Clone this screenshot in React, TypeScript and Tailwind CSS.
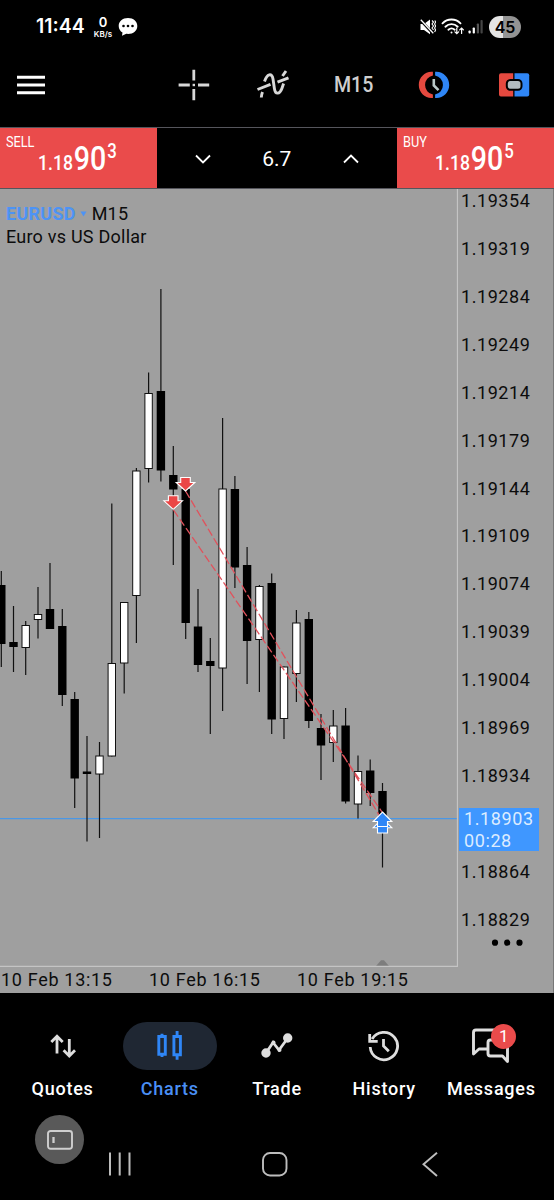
import { ReactNode } from 'react'

type Candle = {
  x: number
  high: number
  top: number
  bottom: number
  low: number
  up?: boolean
}

const candles: Candle[] = [
  { x: 1.3, high: 571, top: 585, bottom: 644, low: 667 },
  { x: 13.5, high: 606, top: 642, bottom: 647, low: 672 },
  { x: 25.7, high: 621, top: 625, bottom: 648, low: 675, up: true },
  { x: 38, high: 587, top: 614, bottom: 620, low: 638.5, up: true },
  { x: 50, high: 563, top: 609, bottom: 629, low: 629 },
  { x: 62.3, high: 609, top: 626, bottom: 695, low: 706 },
  { x: 74.7, high: 692, top: 699, bottom: 778.5, low: 808 },
  { x: 87, high: 736, top: 771.5, bottom: 774, low: 841.5 },
  { x: 99.5, high: 742, top: 755.5, bottom: 774.5, low: 838, up: true },
  { x: 111.8, high: 503.5, top: 663, bottom: 756.5, low: 756.5, up: true },
  { x: 124.2, high: 602, top: 602, bottom: 663.5, low: 693.5, up: true },
  { x: 136.4, high: 468, top: 470.5, bottom: 596, low: 643, up: true },
  { x: 148.6, high: 372.5, top: 393, bottom: 469, low: 482.5, up: true },
  { x: 160.9, high: 289, top: 391, bottom: 470.5, low: 481.5 },
  { x: 173.3, high: 446, top: 475, bottom: 489.5, low: 565 },
  { x: 185.7, high: 489, top: 489, bottom: 623, low: 639 },
  { x: 198, high: 589, top: 626.5, bottom: 665, low: 672 },
  { x: 210.3, high: 638, top: 661, bottom: 666, low: 734 },
  { x: 222.6, high: 418, top: 488.5, bottom: 668.5, low: 711, up: true },
  { x: 234.9, high: 476, top: 489, bottom: 567.5, low: 588 },
  { x: 247.1, high: 547, top: 565, bottom: 641, low: 684 },
  { x: 259.4, high: 585, top: 586, bottom: 640, low: 692, up: true },
  { x: 271.7, high: 573.5, top: 583, bottom: 719.5, low: 734 },
  { x: 284, high: 666.5, top: 666.5, bottom: 719, low: 739, up: true },
  { x: 296.4, high: 610, top: 622.5, bottom: 674, low: 702, up: true },
  { x: 308.8, high: 612, top: 619, bottom: 721, low: 728 },
  { x: 321, high: 714, top: 728, bottom: 745.5, low: 780 },
  { x: 333.3, high: 710, top: 725.5, bottom: 743, low: 762, up: true },
  { x: 345.6, high: 708, top: 725.5, bottom: 801.5, low: 803.5 },
  { x: 358, high: 755.5, top: 771, bottom: 804.5, low: 818.5, up: true },
  { x: 370.2, high: 759.5, top: 770.5, bottom: 793, low: 806 },
  { x: 382.5, high: 783, top: 791, bottom: 820, low: 867.5 },
]

const prices = [
  '1.19354',
  '1.19319',
  '1.19284',
  '1.19249',
  '1.19214',
  '1.19179',
  '1.19144',
  '1.19109',
  '1.19074',
  '1.19039',
  '1.19004',
  '1.18969',
  '1.18934',
  '',
  '1.18864',
  '1.18829',
]

const times = ['10 Feb 13:15', '10 Feb 16:15', '10 Feb 19:15']

function StatusBar() {
  return (
    <div className="flex h-[54px] items-center pl-9 pr-[33px] text-white">
      <span className="w-[50px] font-[Inter] text-[19.5px] font-semibold">11:44</span>
      <div className="ml-[6px] flex w-[22px] flex-col items-center font-[Inter] font-semibold">
        <span className="text-[13px] leading-[13px]">0</span>
        <span className="text-[8px] leading-[10px]">KB/s</span>
      </div>
      <svg className="ml-[4px] h-5 w-5" viewBox="0 0 20 20">
        <path d="M10 1C4.500 1 .7 4.400 .7 9c0 2.900 1.500 5.200 3.800 6.600L4 18.800l4.300-2c.5.1 1.100.1 1.700.1 5.500 0 9.300-3.400 9.300-8S15.500 1 10 1Z" fill="#fff" />
        <g fill="#000">
          <circle cx="5.500" cy="9" r="1.300" />
          <circle cx="10" cy="9" r="1.300" />
          <circle cx="14.500" cy="9" r="1.300" />
        </g>
      </svg>
      <svg className="ml-auto h-5 w-4" viewBox="0 0 16 20" fill="none" stroke="#fff">
        <path d="M.5 7h3.500l6-4.500v14.800L4 13H.5Z" fill="#fff" stroke="none" />
        <path d="M.6 3.200 13 16.500" stroke="#000" strokeWidth="2.600" />
        <path d="M.8 2.800 13.300 16.300" strokeWidth="1.300" />
        <path d="m12 3.500 1.500 1.500L12 7l1.500 2L12 11l1.500 2M14.800 3.500l.8 1.500-1 2 1 2-1 2 1 2-1 2" strokeWidth="1.100" />
      </svg>
      <svg className="ml-[5px] h-5 w-6" viewBox="0 0 24 20" fill="none" stroke="#fff" strokeWidth="1.900" strokeLinecap="round">
        <path d="M1.500 6.300c5-5 13-5 18 0M4.400 9.700c3.500-3.400 8.800-3.400 12.300 0M7.400 12.700c2-1.700 4.300-1.700 6.300 0" />
        <circle cx="10.500" cy="15.500" r="1" fill="#fff" stroke="none" />
        <path d="M15.800 11v5.500m-1.900-1.700 1.900 1.900 1.800-1.900M20.600 16.500v-5.300m-1.900 1.700 1.900-1.900 1.800 1.900" strokeWidth="1.200" />
      </svg>
      <svg className="ml-[3px] h-5 w-[15px]" viewBox="0 0 15 20">
        <rect x=".5" y="13.500" width="2.200" height="3" rx=".8" fill="#fff" />
        <rect x="4.700" y="10.500" width="2.200" height="6" rx=".8" fill="#fff" />
        <rect x="8.800" y="6.500" width="2.200" height="10" rx=".8" fill="#555" />
        <rect x="12.500" y="3" width="2.200" height="13.500" rx=".8" fill="#444" />
      </svg>
      <span className="ml-1.5 flex h-[22px] w-[32px] items-center justify-center rounded-full bg-linear-to-r from-[#e4e4e4] from-45% to-[#939393] to-45% font-[Inter] text-[16px] font-semibold text-black">
        45
      </span>
    </div>
  )
}

function Toolbar() {
  return (
    <div className="flex h-[73px] items-center pb-[12px] pl-[17px] pr-[24px]">
      <svg className="h-5 w-7" viewBox="0 0 28 20" fill="#fff">
        <path d="M0 .7h28v3H0zM0 8.500h28v3H0zM0 16.300h28v3H0z" />
      </svg>
      <svg className="ml-[133px] h-8 w-8" viewBox="0 0 32 32" stroke="#d8d8d8" strokeWidth="2.800">
        <path d="M15.800.8v10.700M15.800 20v11.200M.6 16h11.200M20 16h11.200" />
        <path d="M14.600 16H17" strokeWidth="2.400" />
      </svg>
      <svg className="ml-[46px] h-8 w-9" viewBox="0 0 36 32" fill="none" stroke="#d8d8d8" strokeWidth="2.900">
        <path d="M1.500 20.500 14.500 15.300M21.500 13.200 32.500 8.800" />
        <path d="M5.300 28.500c.1-2 .5-3.700 1.200-5.500M8.500 12.500C11 4.500 16 3.500 17 10l1.400 9.500c.9 6.500 5.400 5.800 7.500 0l1.700-5M26.500 7l3.500-5" />
      </svg>
      <span className="ml-[42px] w-[44px] pb-[2px] text-[22.500px] font-medium leading-8 text-[#cfcfcf]">
        <span className="inline-block origin-left scale-x-[0.87]">M15</span>
      </span>
      <svg className="ml-[40px] h-8 w-8" viewBox="0 0 32 32">
        <path d="M14.900 2.800v3.600a9.800 9.800 0 0 0 0 19.200v3.400h-1.400C6.500 29 .8 23.200.8 16S6.500 2.800 13.500 2.800Z" fill="#e5493f" />
        <path d="M17.100 2.800v3.600a9.800 9.800 0 0 1 0 19.200v3.400h1.400c7 0 12.700-5.800 12.700-13S25.500 2.800 18.500 2.800Z" fill="#2f86f6" />
        <path d="M15.800 10v6.500l4.700 4.700" fill="none" stroke="#b9c8c8" strokeWidth="2.600" />
      </svg>
      <svg className="ml-auto h-8 w-8" viewBox="0 0 32 32">
        <path d="M3 4.300h12.200v23.200H3a2 2 0 0 1-2-2V6.300a2 2 0 0 1 2-2Z" fill="#e5493f" />
        <path d="M16.500 4.300h12.700a2 2 0 0 1 2 2v19.200a2 2 0 0 1-2 2H16.500Z" fill="#2f86f6" />
        <rect x="8.800" y="11" width="14.700" height="9.800" rx="3.500" fill="#b3bcbf" stroke="#000" strokeWidth="2" />
      </svg>
    </div>
  )
}

function PriceButton({ label, big, pip, className }: { label: string; big: string; pip: string; className: string }) {
  return (
    <div className={`relative h-full bg-[#ea4b4b] text-white ${className}`}>
      <span className="absolute left-1.5 top-[6px] origin-left scale-x-[0.82] text-[15.500px] leading-[16px]">{label}</span>
      <div className="absolute left-[38px] top-[12px] flex origin-left scale-x-[0.84] items-baseline leading-[36px]">
        <span className="text-[21px] font-medium">1.18</span>
        <span className="ml-[1px] text-[34px] font-medium">{big}</span>
        <span className="relative -top-[12px] ml-[1px] text-[20px] font-medium">{pip}</span>
      </div>
    </div>
  )
}

function TradeBar() {
  return (
    <div className="flex h-[62px] border-y border-[#55555c]">
      <PriceButton label="SELL" big="90" pip="3" className="w-[156.500px]" />
      <div className="flex flex-1 items-center justify-between px-[38px]">
        <svg className="mt-[2px] h-4 w-4" viewBox="0 0 16 16" fill="none" stroke="#fff" strokeWidth="1.800">
          <path d="m1 4.500 7 7 7-7" />
        </svg>
        <span className="mt-[4px] text-[21px] text-white">6.7</span>
        <svg className="mt-[2px] h-4 w-4" viewBox="0 0 16 16" fill="none" stroke="#fff" strokeWidth="1.800">
          <path d="m1 11.500 7-7 7 7" />
        </svg>
      </div>
      <PriceButton label="BUY" big="90" pip="5" className="w-[157px]" />
    </div>
  )
}

function Plot() {
  return (
    <svg className="block h-[778px] w-[458px]" viewBox="0 189 458 778">
      <path d="M0 818.700h457" stroke="#4a97e6" strokeWidth="1.300" />
      {candles.map((c) => (
        <g key={c.x}>
          <path d={`M${c.x} ${c.high}V${c.low}`} stroke="#111" strokeWidth="1.200" />
          {c.up ? (
            <rect x={c.x - 3.7} y={c.top + 0.5} width="7.400" height={c.bottom - c.top - 1} fill="#fff" stroke="#111" />
          ) : (
            <rect x={c.x - 4.2} y={c.top} width="8.400" height={c.bottom - c.top} fill="#000" />
          )}
        </g>
      ))}

      {/* closed positions */}
      <g fill="none" stroke="#e0525c" strokeWidth="1.300" strokeDasharray="8 3">
        <path d="M173.500 510 382 812M185.500 491 382 820" />
      </g>
      <g fill="#ea4646" stroke="#fff" strokeWidth="1.100">
        <path d="M180.700 477.500h9.600v5h4.500l-9.300 8.500-9.300-8.500h4.500Z" />
        <path d="M168.400 495.800h9.600v5h4.500l-9.300 8.500-9.300-8.500h4.500Z" />
      </g>
      <g fill="#2f86f6" stroke="#fff" strokeWidth="1.100">
        <path d="m382.500 818.500 9.300 9.200h-4.300v5.300h-10v-5.300h-4.300Z" />
        <path d="m382.500 812 9.300 9.500h-4.300v5h-10v-5h-4.300Z" />
      </g>

      <path d="M374.800 967.500 381 960.300h3l6.200 7.200Z" fill="#7d7d7d" />
      <path d="M457.500 189v777.500H0" fill="none" stroke="#c4c4c4" strokeWidth="1.300" />
      <path d="M1.500 966v3M148.500 966v3M296.500 966v3" stroke="#c4c4c4" />
    </svg>
  )
}

function Chart() {
  return (
    <div className="relative h-[804px] border-r border-[#777] bg-[#9f9f9f] text-[#0c0c0c]">
      <div className="flex">
        <Plot />
        <div className="flex h-[742px] flex-col justify-between pl-[3px] text-[18px] leading-[23px] tracking-[0.550px]">
          {prices.map((price, index) => (
            <span key={index} className="h-[23px]">{price}</span>
          ))}
        </div>
      </div>
      <div className="flex pl-[1px] text-[18px] leading-[26px] tracking-[0.680px]">
        {times.map((time) => (
          <span key={time} className="w-[148px]">{time}</span>
        ))}
      </div>

      <div className="absolute left-1.5 top-[13px] text-[18px] leading-[23px]">
        <div className="flex items-center">
          <span className="font-bold tracking-[0.250px] text-[#4d93f5]">EURUSD</span>
          <svg className="ml-[4px] mr-[5px] h-1.5 w-[7px]" viewBox="0 0 7 6">
            <path d="M.5.500h6l-3 5Z" fill="#4d93f5" />
          </svg>
          <span className="tracking-[0.200px]">M15</span>
        </div>
        <div className="tracking-[0.230px]">Euro vs US Dollar</div>
      </div>
      <div className="absolute left-[459px] top-[619px] h-[43px] w-[80px] bg-[#3f97ff] pl-[5px] text-[18px] leading-[21.500px] tracking-[0.600px] text-[#dcecff]">
        <div>1.18903</div>
        <div>00:28</div>
      </div>
      <svg className="absolute left-[491px] top-[750px] h-2 w-8" viewBox="0 0 32 8">
        <circle cx="4" cy="3.700" r="3.100" />
        <circle cx="16.200" cy="3.700" r="3.100" />
        <circle cx="28.500" cy="3.700" r="3.100" />
      </svg>
    </div>
  )
}

function NavItem({ label, active, children }: { label: string; active?: boolean; children: ReactNode }) {
  return (
    <div className="flex w-[107.200px] flex-col items-center">
      <div className={`flex h-[49px] w-[94px] items-center justify-center rounded-full ${active ? 'bg-[#1f2733]' : ''}`}>
        {children}
      </div>
      <span className={`mt-[7px] text-[18px] font-medium leading-[24px] tracking-[0.750px] ${active ? 'text-[#4a8ff5]' : 'text-white'}`}>
        {label}
      </span>
    </div>
  )
}

function BottomNav() {
  return (
    <div className="flex h-[108px] pl-[9px] pt-[29px]">
      <NavItem label="Quotes">
        <svg className="h-8 w-8" viewBox="0 0 32 32" fill="none" stroke="#dedede" strokeWidth="2.800">
          <path d="M10 23.500V7M4.300 12 10 6.300l5.700 5.700M22.300 9v16M16.600 20.200l5.700 5.700 5.700-5.700" />
        </svg>
      </NavItem>
      <NavItem label="Charts" active>
        <svg className="h-8 w-8" viewBox="0 0 32 32" fill="none" stroke="#2f86f6" strokeWidth="2.900">
          <path d="M4.800 6.500h6.500v17.800H4.800ZM8 3.800v2.700M8 24.300V27M19.900 6.500h6.500v18.300h-6.500ZM23.100 1v5.500M23.100 24.800v5" />
        </svg>
      </NavItem>
      <NavItem label="Trade">
        <svg className="h-8 w-8" viewBox="0 0 32 32" fill="#dedede" stroke="#dedede" strokeWidth="2.800">
          <path d="m5 23 7-10.500 6 7.500 8.500-11.500" fill="none" />
          <circle cx="5" cy="23" r="3.300" />
          <circle cx="12.500" cy="12.500" r="2" stroke="none" />
          <circle cx="18.500" cy="20" r="2" stroke="none" />
          <circle cx="26.700" cy="8" r="3.300" />
        </svg>
      </NavItem>
      <NavItem label="History">
        <svg className="h-8 w-8" viewBox="0 0 32 32" fill="none" stroke="#dedede" strokeWidth="2.800">
          <path d="M2.200 17A13.700 13.700 0 1 0 4.100 9M1.700 4v7.300h8M15.500 9v7l5.300 5.300" />
        </svg>
      </NavItem>
      <NavItem label="Messages">
        <div className="relative">
          <svg className="h-10 w-10" viewBox="0 0 40 40" fill="none" stroke="#dedede" strokeWidth="2.900" strokeLinejoin="round">
            <path d="M32 4H5a2.500 2.500 0 0 0-2.500 2.500v21.500L8 23h9V16.500a2.500 2.500 0 0 1 2.500-2.500h17v21.500L31.500 30h-12a2.500 2.500 0 0 1-2.500-2.500V23" />
          </svg>
          <span className="absolute -top-[2px] left-[20px] flex h-[25px] w-[25px] items-center justify-center rounded-full bg-[#ea4b4b] text-[17px] text-white">
            1
          </span>
        </div>
      </NavItem>
    </div>
  )
}

function SystemBar() {
  return (
    <div className="flex flex-1 items-start pl-[35px]">
      <div className="mt-[14px] flex h-[49px] w-[49px] items-center justify-center rounded-full bg-[#595959]">
        <svg className="h-5 w-[26px]" viewBox="0 0 26 20" fill="none" stroke="#cfcfcf" strokeWidth="1.900">
          <rect x="1" y="1" width="24" height="17.800" rx="2.500" />
          <path d="M6.500 7v6" strokeWidth="2.300" />
        </svg>
      </div>
      <svg className="ml-[24px] mt-[51px] h-6 w-6" viewBox="0 0 24 24" stroke="#bdbdbd" strokeWidth="2">
        <path d="M2 .5v23M11.700.5v23M21.500.5v23" />
      </svg>
      <svg className="ml-[130px] mt-[51px] h-[25px] w-[26px]" viewBox="0 0 26 25" fill="none" stroke="#bdbdbd" strokeWidth="1.900">
        <rect x="1" y="1" width="23.500" height="22.500" rx="7" />
      </svg>
      <svg className="ml-[134px] mt-[51px] h-[25px] w-4" viewBox="0 0 16 25" fill="none" stroke="#bdbdbd" strokeWidth="1.900">
        <path d="M15 .7 1.500 12.300 15 24" />
      </svg>
    </div>
  )
}

export default function App() {
  return (
    <div className="flex h-[1200px] w-[554px] flex-col overflow-hidden bg-black font-[Roboto,sans-serif]">
      <StatusBar />
      <Toolbar />
      <TradeBar />
      <Chart />
      <BottomNav />
      <SystemBar />
    </div>
  )
}
